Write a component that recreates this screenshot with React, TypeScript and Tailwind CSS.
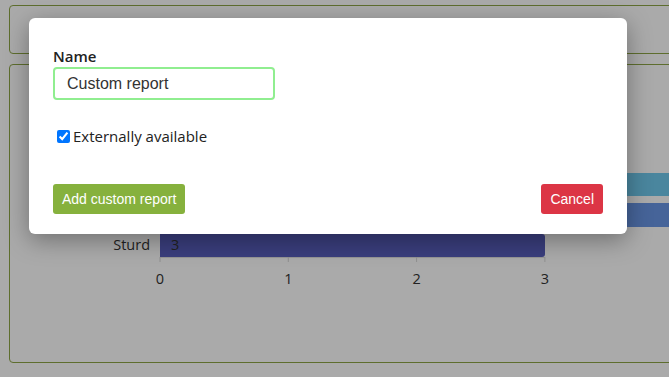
import { useState } from 'react';

const uiFont = '[font-family:"Open_Sans","Noto_Sans",sans-serif]';
const btnFont = '[font-family:"Liberation_Sans",Arial,sans-serif]';

function ReportChart() {
  const ticks = [0, 1, 2, 3];
  const x0 = 150;
  const step = 128.3;
  return (
    <svg className="absolute inset-0 h-full w-full" aria-hidden="false">
      {/* rows hidden behind the modal, only their tails show */}
      <rect x={x0} y={108} width={700} height={23} fill="#6fc9ee" />
      <rect x={x0} y={138} width={700} height={24} fill="#6a96e6" />
      <path d={`M${x0} 169 h382 a3 3 0 0 1 3 3 v17 a3 3 0 0 1 -3 3 h-382 z`} fill="#575dbc" />
      <text x={140} y={185} textAnchor="end" fontSize="14.5" fill="#333" fontFamily="Open Sans, sans-serif">Sturd</text>
      <text x={161} y={185} fontSize="14.5" fill="#333" fontFamily="Open Sans, sans-serif">3</text>
      <line x1={x0} y1={192.5} x2={x0 + step * 3} y2={192.5} stroke="#e0e0e0" />
      {ticks.map((t) => (
        <g key={t}>
          <line x1={x0 + step * t} y1={192} x2={x0 + step * t} y2={197} stroke="#d8d8d8" />
          <text x={x0 + step * t} y={219} textAnchor="middle" fontSize="14.5" fill="#333" fontFamily="Open Sans, sans-serif">
            {t}
          </text>
        </g>
      ))}
    </svg>
  );
}

export default function App() {
  const [name, setName] = useState('Custom report');
  const [external, setExternal] = useState(true);

  return (
    <div className={`relative h-[377px] w-[669px] overflow-hidden bg-white ${uiFont}`}>
      <div className="flex flex-col gap-[10px] pl-[9px] pt-[5px]">
        <div className="h-[49px] rounded-[4px] border border-[#8ea545] -mr-[20px]" />
        <div className="relative h-[299px] rounded-[4px] border border-[#8ea545] -mr-[20px]">
          <ReportChart />
        </div>
      </div>

      <div className="absolute inset-0 bg-black/[0.335]" />

      <div className="absolute left-[29px] top-[18px] w-[598px] rounded-[6px] bg-white px-[24px] pb-[20px] pt-[28px] shadow-[0_6px_24px_rgba(0,0,0,0.35)]">
        <label className="block text-[15px] font-semibold leading-[20px] text-[#222]">Name</label>
        <input
          value={name}
          onChange={(e) => setName(e.target.value)}
          className={`mt-[1px] block h-[33px] w-[222px] rounded-[4px] border-2 border-[#90ee90] px-[12px] text-[16px] text-[#333] outline-none ${btnFont}`}
        />
        <label className="mt-[26px] flex items-center gap-[3px] text-[15px] leading-[20px] text-[#222]">
          <input
            type="checkbox"
            checked={external}
            onChange={(e) => setExternal(e.target.checked)}
            className="ml-[4px] h-[13px] w-[13px] accent-[#0075ff]"
          />
          Externally available
        </label>
        <div className={`mt-[38px] flex items-center justify-between text-[14px] text-white ${btnFont}`}>
          <button className="h-[30px] rounded-[3px] bg-[#86b13d] px-[9px]">Add custom report</button>
          <button className="h-[30px] rounded-[3px] bg-[#dc3545] px-[9px]">Cancel</button>
        </div>
      </div>
    </div>
  );
}
